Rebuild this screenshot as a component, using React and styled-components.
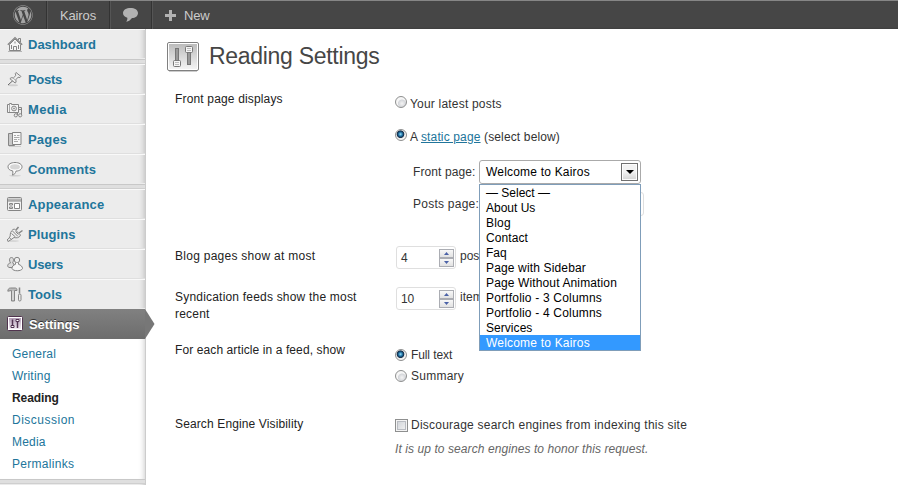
import React from "react";
import styled, { createGlobalStyle, css } from "styled-components";
import { FaWordpress } from "react-icons/fa";

const Global = createGlobalStyle`
  *, *::before, *::after { box-sizing: border-box; }
  html, body { margin: 0; padding: 0; background: #fff; overflow: hidden; }
  body { font-family: "Liberation Sans", Arial, sans-serif; font-size: 12px; color: #333; }
`;

const Page = styled.div`
  height: 485px;
  display: flex;
  flex-direction: column;
  overflow: hidden;
`;

const AdminBar = styled.header`
  height: 29px;
  flex: none;
  display: flex;
  color: #ccc;
  font-size: 13px;
  background: linear-gradient(#464646 0, #464646 26px, #3a3a3a 29px);
  border-top: 1px solid #868686;
`;

const BarItem = styled.div`
  width: ${(p) => p.$width}px;
  display: flex;
  align-items: center;
  justify-content: ${(p) => (p.$start ? "flex-start" : "center")};
  padding-left: ${(p) => (p.$start ? 13 : 0)}px;
  gap: 8px;
  letter-spacing: ${(p) => p.$track || 0}px;
  border-right: ${(p) => (p.$start ? "0" : "1px solid #333")};
  box-shadow: ${(p) => (p.$start ? "none" : "1px 0 #555")};
  svg { flex: none; }
`;

const Body = styled.div`
  flex: 1;
  display: flex;
  min-height: 0;
`;

const Sidebar = styled.nav`
  width: 146px;
  flex: none;
  position: relative;
  background: #ececec;
  border-right: 1px solid #ccc;
  box-shadow: inset -6px 0 6px -6px rgba(0, 0, 0, 0.25);
`;

const MenuSeparator = styled.div`
  height: 5px;
  background: #dfdfdf;
  border-top: 1px solid #c8c8c8;
  border-bottom: 1px solid #cfcfcf;
`;

const MenuItem = styled.a`
  height: 30px;
  display: flex;
  align-items: center;
  padding-left: 7px;
  gap: 5px;
  color: #21759b;
  font-size: 13px;
  font-weight: bold;
  letter-spacing: ${(p) => p.$track || 0}px;
  border-top: 1px solid #f9f9f9;
  border-bottom: 1px solid ${(p) => (p.$last ? "#ececec" : "#dfdfdf")};
  svg { flex: none; }
  ${(p) =>
    p.$active &&
    css`
      position: relative;
      width: 145px;
      gap: 6px;
      color: #fff;
      text-shadow: 0 -1px 0 #333;
      background: linear-gradient(#808080, #6d6d6d);
      border-top: 1px solid #808080;
      border-bottom: 1px solid #6d6d6d;
    `}
`;

const ActiveArrow = styled.svg`
  position: absolute;
  left: 145px;
  top: -1px;
`;

const SubMenu = styled.div`
  height: 140px;
  padding: 4px 0 0 12px;
  background: #fff;
  box-shadow: inset -6px 0 6px -6px rgba(0, 0, 0, 0.25);
`;

const SubItem = styled.a`
  display: block;
  height: 22px;
  line-height: 22px;
  letter-spacing: ${(p) => p.$track || 0}px;
  color: ${(p) => (p.$current ? "#222" : "#21759b")};
  font-weight: ${(p) => (p.$current ? "bold" : "normal")};
`;

const Main = styled.main`
  flex: 1;
  padding: 12px 0 0 21px;
`;

const Heading = styled.div`
  height: 49px;
  display: flex;
  gap: 10px;
`;

const Title = styled.h1`
  margin: 0;
  font-size: 23px;
  line-height: 31px;
  font-weight: normal;
  color: #464646;
  letter-spacing: ${(p) => p.$track}px;
`;

const Row = styled.section`
  display: grid;
  grid-template-columns: 220px 1fr;
  height: ${(p) => p.$height}px;
  padding-left: 8px;
`;

const Label = styled.div`
  padding-top: 1px;
  line-height: 17px;
  color: #222;
`;

const Words = styled.span`
  white-space: nowrap;
  letter-spacing: ${(p) => p.$track || 0}px;
`;

const Field = styled.div`
  padding-top: ${(p) => p.$top || 0}px;
`;

const Choice = styled.label`
  display: flex;
  align-items: center;
  gap: ${(p) => p.$gap || 3}px;
  height: ${(p) => p.$height}px;
  margin-top: ${(p) => p.$space || 0}px;
  line-height: 16px;
  white-space: nowrap;
`;

const Radio = styled.span`
  width: 12px;
  height: 12px;
  flex: none;
  border-radius: 50%;
  border: 1px solid #8e8f8f;
  margin-bottom: ${(p) => p.$raise || 0}px;
  background: ${(p) =>
    p.$on
      ? "radial-gradient(circle at 45% 42%, #9fe0f8 0, #2d86b8 1.6px, #12395c 3px, #16304c 3.4px, #e6e6e6 4.2px, #f6f6f6 5px)"
      : "radial-gradient(circle at 60% 65%, #f4f4f4 0, #d4d6da 3.6px, #f6f6f6 4.4px)"};
`;

const Check = styled.span`
  width: 13px;
  height: 13px;
  flex: none;
  border: 1px solid #8e8f8f;
  box-shadow: inset 0 0 0 1px #f4f4f4, inset 0 0 0 2px #b9bcc2;
  background: linear-gradient(135deg, #cbcfd5, #f6f6f6);
`;

const Link = styled.a`
  color: #21759b;
  text-decoration: underline;
`;

const PickLine = styled.div`
  display: flex;
  align-items: center;
  height: 32px;
  padding-left: 18px;
`;

const PickName = styled.span`
  width: 66px;
  white-space: nowrap;
  letter-spacing: ${(p) => p.$track || 0}px;
`;

const Select = styled.div`
  position: relative;
  width: ${(p) => p.$width}px;
  height: 24px;
  display: flex;
  align-items: center;
  justify-content: ${(p) => (p.$open ? "space-between" : "flex-end")};
  padding: 0 2px 0 6px;
  border: 1px solid ${(p) => (p.$open ? "#aaa" : "#dfdfdf")};
  border-radius: 3px;
  background: #fff;
  color: #000;
`;

const SelectButton = styled.span`
  width: 17px;
  height: 18px;
  display: flex;
  align-items: center;
  justify-content: center;
  border: 1px solid #707070;
  box-shadow: inset 0 0 0 1px #fcfcfc;
  background: linear-gradient(#f2f2f2 50%, #d4d4d4);
`;

const Options = styled.div`
  position: absolute;
  z-index: 2;
  left: -1px;
  top: 23px;
  width: 162px;
  border: 1px solid #7f9db9;
  background: #fff;
`;

const Option = styled.div`
  height: 15px;
  line-height: 16px;
  padding-left: 6px;
  white-space: nowrap;
  letter-spacing: ${(p) => p.$track || 0}px;
  color: ${(p) => (p.$on ? "#fff" : "#000")};
  background: ${(p) => (p.$on ? "#3399ff" : "#fff")};
`;

const NumberLine = styled.div`
  display: flex;
  align-items: center;
  gap: 4px;
  padding-left: 1px;
  margin-top: -1px;
`;

const NumberBox = styled.span`
  width: 60px;
  height: 23px;
  display: flex;
  align-items: center;
  justify-content: space-between;
  padding: 0 1px 0 4px;
  border: 1px solid #dfdfdf;
  border-radius: 3px;
`;

const Unit = styled.span`
  padding-bottom: 4px;
`;

const Steps = styled.span`
  width: 15px;
  display: flex;
  flex-direction: column;
`;

const Step = styled.span`
  height: 9px;
  display: flex;
  align-items: center;
  justify-content: center;
  border: 1px solid #abadb3;
  background: linear-gradient(#f8f8f8, #e2e2e2);
`;

const Note = styled.p`
  margin: 0;
  line-height: 16px;
  padding-top: 7px;
  font-style: italic;
  color: #666;
`;

const Glyph = ({ children }) => (
  <svg width="16" height="18" viewBox="0 0 16 18" fill="none" stroke="#858585" strokeWidth="1">
    {children}
  </svg>
);

const icons = {
  Dashboard: (
    <Glyph>
      <path d="M11.5 5V3.5h2V7" />
      <path d="M2.5 9.5v6h11v-6L8 4z" fill="#f5f5f5" />
      <path d="M.8 9.7 8 2.6l7.2 7.1" strokeWidth="1.3" />
      <path d="M6.5 15.5v-4h3v4M4.5 10v4M11.5 10v4M8 6.5v2" />
      <path d="M1 16.5h14" stroke="#b5b5b5" />
    </Glyph>
  ),
  Posts: (
    <Glyph>
      <ellipse cx="6" cy="15.2" rx="5" ry="1" fill="#cfcfcf" stroke="none" />
      <path d="m1 15 5-4.5" stroke="#666" />
      <path d="m9 2.5 5 4-1 1-2-.3-2.2 2.6.3 2.4-1 .8-5.2-4.3 1.3-1 2.2.2 2.4-2.3-.5-2z" fill="#eee" />
      <path d="m6 8 3 2.6" stroke="#aaa" />
    </Glyph>
  ),
  Media: (
    <Glyph>
      <path d="M.5 4.500h2v-1h2v1h7v8H.5z" fill="#f4f4f4" />
      <circle cx="7" cy="8.500" r="2.400" />
      <circle cx="7" cy="8.500" r=".6" />
      <path d="M2.500 5v7" stroke="#aaa" />
      <path d="M11.500 7.500h3v7.500M11.500 9.500h3M10.500 15v-2.500" />
      <circle cx="8.800" cy="15.300" r="1.600" fill="#eee" />
      <circle cx="13.200" cy="15.300" r="1.600" fill="#eee" />
    </Glyph>
  ),
  Pages: (
    <Glyph>
      <path d="M1.500 3.500h6v12h-6z" fill="#c8c8c8" />
      <path d="M5.500 2.500h8.500v12H5.500z" fill="#f8f8f8" />
      <path d="M7 5.500h2m1 0h2.500M7 7.500h5.500M7 9.500h3m1 0h1.500M7 11.500h4" stroke="#aaa" />
      <path d="M2 16.500h12" stroke="#ccc" />
    </Glyph>
  ),
  Comments: (
    <Glyph>
      <ellipse cx="8" cy="15.800" rx="6" ry=".8" fill="#cfcfcf" stroke="none" />
      <path d="M8 2.500c4 0 7 1.700 7 4.300 0 2.500-2.500 4.200-6 4.300-.5 2-1.500 3.500-3.500 4 .5-1.300.5-2.700.2-4.200C2.700 10.400 1 9 1 6.800 1 4.200 4 2.500 8 2.500z" fill="#fafafa" />
      <path d="M3 7c0-1.700 2.200-2.700 5-2.700s5 1 5 2.700-2.200 2.500-5 2.500S3 8.700 3 7z" fill="#d6d6d6" stroke="none" />
    </Glyph>
  ),
  Appearance: (
    <Glyph>
      <rect x=".5" y="2.500" width="14" height="13" rx="1" fill="#f2f2f2" />
      <path d="M1 4.500h13" stroke="#b5b5b5" strokeWidth="2" />
      <path d="M1 6h13" />
      <path d="M7.500 8.500h5v5h-5z" fill="#fff" />
      <path d="M2.500 8.500h3v1.500h-3zM2.500 12h3v1.500h-3z" />
    </Glyph>
  ),
  Plugins: (
    <Glyph>
      <ellipse cx="6" cy="16" rx="6" ry=".8" fill="#cfcfcf" stroke="none" />
      <path d="m9 5 2.500-3M12 8l3.500-2.500" strokeWidth="1.500" />
      <path d="m6 4.500 1.500-.500 6 6c-.5 1.300-1.500 2.500-3 2.700-1.500.3-2.500 0-3.500-.2L3.500 15 1 16.500 0 15l2.200-2 1-2C3 8.500 4 6 6 4.500z" fill="#eee" />
      <path d="m5.500 6 5.500 5.500M2.500 13l2 1.500M8.500 6.500l3 3M4.500 8.500l4 3.500" />
    </Glyph>
  ),
  Users: (
    <Glyph>
      <path d="M4.500 2.500c1.300 0 2 1 2 2.300S5.800 7.500 5.500 8L7 9v3.500H2C.8 12 .5 11 .8 10c.4-1.300 1.500-1.700 2.700-2C3 7 2.500 6.200 2.500 4.800s.7-2.300 2-2.300z" fill="#ddd" />
      <circle cx="10" cy="5" r="2.700" fill="#eee" />
      <path d="M8.500 7.700v1.600c-2.300.8-3.500 2.200-3.500 4.200 1 3 9.500 3 10.500 0 0-2-1.700-3.400-4-4.200V7.700" fill="#f7f7f7" />
    </Glyph>
  ),
  Tools: (
    <Glyph>
      <path d="M.8 6.200C1 4 2 3 3.500 3h5c1 0 1.500.8 1.500 2.500H7.500v10.500h-3V5.500z" fill="#bbb" />
      <path d="M6 6v9" stroke="#eee" />
      <path d="M12.500 2.500v6" strokeWidth="1.500" />
      <rect x="11.500" y="9" width="2.500" height="7" rx="1.200" fill="#eee" />
    </Glyph>
  ),
  Settings: (
    <Glyph>
      <defs>
        <linearGradient id="active" x1="0" y1="0" x2="0" y2="1">
          <stop offset="0" stopColor="#b39db6" />
          <stop offset="1" stopColor="#f3ecf4" />
        </linearGradient>
      </defs>
      <rect x=".5" y="1.500" width="15" height="14" rx="1" fill="#fff" stroke="#51344f" />
      <rect x="2" y="3" width="12" height="11" fill="url(#active)" stroke="none" />
      <path d="M5.500 4.500v6M10.500 7v6" stroke="#523452" strokeWidth="1.500" />
      <path d="M4 10.500h3v2H4zM9 4.500h3v2H9z" fill="#fff" stroke="#523452" />
    </Glyph>
  ),
};

const SettingsIcon = () => (
  <svg width="32" height="31" viewBox="0 0 32 31">
    <defs>
      <linearGradient id="plate" x1="0" y1="0" x2="0" y2="1">
        <stop offset="0" stopColor="#bcbcbc" />
        <stop offset="1" stopColor="#f4f4f4" />
      </linearGradient>
    </defs>
    <path d="M2 30.500h28" stroke="#ccc" />
    <rect x=".5" y="1.500" width="31" height="28" rx="1.500" fill="#fff" stroke="#808080" />
    <rect x="2" y="3" width="28" height="25" fill="url(#plate)" />
    <rect x="8.500" y="7.500" width="3" height="14" fill="#999" stroke="#777" />
    <rect x="20.500" y="7.500" width="3" height="16" fill="#999" stroke="#777" />
    <rect x="6.500" y="19.500" width="7" height="6" rx="1" fill="#f5f5f5" stroke="#777" />
    <rect x="18.500" y="5.500" width="7" height="6" rx="1" fill="#f5f5f5" stroke="#777" />
    <path d="M8 21.500h4M8 23.500h4M20 7.500h4M20 9.500h4" stroke="#bbb" />
  </svg>
);

const groups = [
  [["Dashboard", 0]],
  [["Posts", -0.3], ["Media", 0.4], ["Pages", 0.2], ["Comments", 0.1]],
  [["Appearance", 0.2], ["Plugins", 0.1], ["Users", -0.2], ["Tools", 0.1]],
];

const subItems = [
  ["General", 0.2], ["Writing", 0.2], ["Reading", -0.1], ["Discussion", 0.5], ["Media", 0.2], ["Permalinks", 0.3],
];

const options = [
  ["— Select —", 0], ["About Us", 0], ["Blog", 0.2], ["Contact", 0.1], ["Faq", 0],
  ["Page with Sidebar", 0.15], ["Page Without Animation", 0.13], ["Portfolio - 3 Columns", 0.19],
  ["Portfolio - 4 Columns", 0.19], ["Services", 0.05], ["Welcome to Kairos", 0.2],
];

const DropButton = () => (
  <SelectButton>
    <svg width="8" height="4" viewBox="0 0 8 4"><path d="M0 0h8L4 4z" fill="#000" /></svg>
  </SelectButton>
);

const NumberInput = ({ value }) => (
  <NumberBox>
    <Words $track={-0.1}>{value}</Words>
    <Steps>
      <Step><svg width="5" height="3" viewBox="0 0 5 3"><path d="M0 3h5L2.500 0z" fill="#4b62a7" /></svg></Step>
      <Step><svg width="5" height="3" viewBox="0 0 5 3"><path d="M0 0h5L2.500 3z" fill="#4b62a7" /></svg></Step>
    </Steps>
  </NumberBox>
);

const NumberField = ({ value, unit }) => (
  <Field>
    <NumberLine><NumberInput value={value} /><Unit>{unit}</Unit></NumberLine>
  </Field>
);

export default function App() {
  return (
    <Page>
      <Global />
      <AdminBar>
        <BarItem $width={47}><FaWordpress size={20} color="#a5a5a5" /></BarItem>
        <BarItem $width={63} $track={-0.1}>Kairos</BarItem>
        <BarItem $width={42}>
          <svg width="15" height="14" viewBox="0 0 15 14">
            <path d="M7.500 0C11.600 0 15 1.900 15 5s-2.700 4.900-6 5.100C7.500 12 6 13.400 3.200 13.700c1-1.200 1.300-2.500 1.100-4C1.800 9 0 7.400 0 5c0-3.100 3.400-5 7.500-5z" fill="#b2b2b2" />
          </svg>
        </BarItem>
        <BarItem $width={80} $track={-0.2} $start>
          <svg width="11" height="11" viewBox="0 0 11 11"><path d="M4 0h3v4h4v3H7v4H4V7H0V4h4z" fill="#b2b2b2" /></svg>
          New
        </BarItem>
      </AdminBar>
      <Body>
        <Sidebar>
          {groups.map((group, g) => (
            <React.Fragment key={g}>
              {group.map(([name, track], i) => (
                <MenuItem key={name} $track={track} $last={i === group.length - 1}>{icons[name]}{name}</MenuItem>
              ))}
              {g < 2 && <MenuSeparator />}
            </React.Fragment>
          ))}
          <MenuItem $active $track={-0.1}>
            {icons.Settings}Settings
            <ActiveArrow width="10" height="30" viewBox="0 0 10 30"><path d="M0 0 9.500 15 0 30z" fill="#777" /></ActiveArrow>
          </MenuItem>
          <SubMenu>
            {subItems.map(([name, track]) => (
              <SubItem key={name} $track={track} $current={name === "Reading"}>{name}</SubItem>
            ))}
          </SubMenu>
          <MenuSeparator />
        </Sidebar>
        <Main>
          <Heading><SettingsIcon /><Title $track={-0.3}>Reading Settings</Title></Heading>
          <Row $height={157}>
            <Label><Words $track={0.16}>Front page displays</Words></Label>
            <Field $top={6}>
              <Choice $height={16}><Radio $raise={4} /><Words $track={0.2}>Your latest posts</Words></Choice>
              <Choice $height={38} $space={6}>
                <Radio $on $raise={4} /><Words $track={0.14}>A <Link>static page</Link> (select below)</Words>
              </Choice>
              <PickLine>
                <PickName $track={0.1}>Front page:</PickName>
                <Select $width={162} $open>
                  <Words $track={0.2}>Welcome to Kairos</Words>
                  <DropButton />
                  <Options>
                    {options.map(([name, track]) => (
                      <Option key={name} $track={track} $on={name === "Welcome to Kairos"}>{name}</Option>
                    ))}
                  </Options>
                </Select>
              </PickLine>
              <PickLine>
                <PickName $track={0.25}>Posts page:</PickName>
                <Select $width={165}><DropButton /></Select>
              </PickLine>
            </Field>
          </Row>
          <Row $height={41}>
            <Label><Words $track={0.27}>Blog pages show at most</Words></Label>
            <NumberField value="4" unit="posts" />
          </Row>
          <Row $height={53}>
            <Label><Words $track={0.2}>Syndication feeds show the most<br />recent</Words></Label>
            <NumberField value="10" unit="items" />
          </Row>
          <Row $height={74}>
            <Label><Words $track={0.1}>For each article in a feed, show</Words></Label>
            <Field $top={3}>
              <Choice $height={21} $gap={4}><Radio $on /><Words $track={-0.1}>Full text</Words></Choice>
              <Choice $height={21} $gap={4}><Radio /><Words $track={0.25}>Summary</Words></Choice>
            </Field>
          </Row>
          <Row $height={60}>
            <Label><Words $track={0.13}>Search Engine Visibility</Words></Label>
            <Field $top={1}>
              <Choice $height={18} $gap={3}><Check /><Words $track={0.23}>Discourage search engines from indexing this site</Words></Choice>
              <Note><Words $track={0.08}>It is up to search engines to honor this request.</Words></Note>
            </Field>
          </Row>
        </Main>
      </Body>
    </Page>
  );
}
